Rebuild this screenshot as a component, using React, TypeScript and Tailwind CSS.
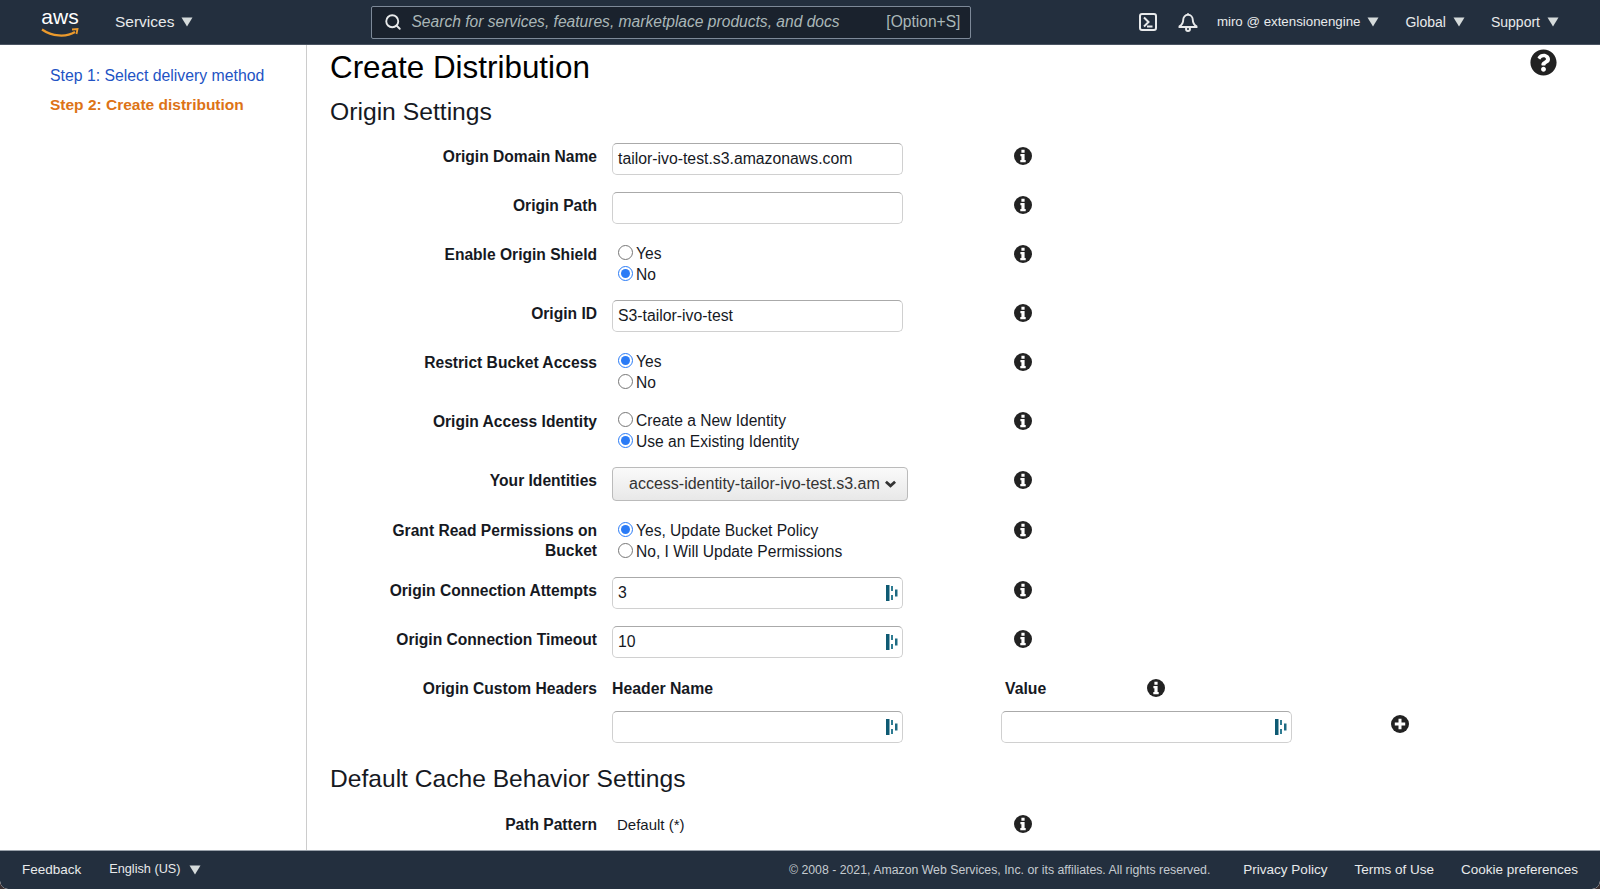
import { Search } from "lucide-react";
import { FaQuestionCircle } from "react-icons/fa";

function Caret({ className = "" }: { className?: string }) {
  return (
    <svg viewBox="0 0 12 10" className={`w-[12px] h-[10px] ${className}`}>
      <path d="M0.5 0.5h11L6 9.5z" fill="#d5dbdb" />
    </svg>
  );
}

function Info() {
  return (
    <svg viewBox="0 0 18 18" className="h-[18px] w-[18px]">
      <circle cx="9" cy="9" r="9" fill="#222" />
      <path d="M7.4 2.8h3.2v2.9H7.4zM6.4 7h4.2v6h1.1v2.2H6.3V13h1.1V9.2h-1z" fill="#fff" />
    </svg>
  );
}

// little password manager mark that sits inside the text inputs
function FieldMark() {
  return (
    <svg viewBox="0 0 13 16" className="w-[13px] h-[16px]">
      <path d="M1 0h3.5v16H1z" fill="#0e5a73" />
      <path d="M6 1h2v5H6zM6 10h2v5H6z" fill="#2f7c93" />
      <path d="M10 4.5h2.5v7H10z" fill="#1d6a82" />
    </svg>
  );
}

function Field({ value = "", mark = false, className = "" }: { value?: string; mark?: boolean; className?: string }) {
  return (
    <div className={`h-[32px] w-[291px] flex items-center justify-between rounded-[5px] border border-[#d0d0d0] border-t-[#aaa] bg-white pl-[5px] pr-[4px] text-[15.8px] text-[#16191f] ${className}`}>
      <span>{value}</span>
      {mark && <FieldMark />}
    </div>
  );
}

function Radio({ label, checked = false }: { label: string; checked?: boolean }) {
  return (
    <label className="flex h-[21px] items-center text-[15.6px] leading-[21px] text-[#16191f]">
      <input type="radio" defaultChecked={checked} name={label} className="ml-[6px] mr-[3px] -mt-[3px] h-[15px] w-[15px] accent-[#2a7bf6]" />
      {label}
    </label>
  );
}

function Row({ label, height, info = true, children }: { label: string; height: string; info?: boolean; children: React.ReactNode }) {
  return (
    <div className={`flex ${height}`}>
      <div className="w-[267px] shrink-0 pl-[50px] pt-[4px] text-right text-[15.6px] font-bold leading-[20px] text-[#16191f]">{label}</div>
      <div className="ml-[15px] w-[402px] shrink-0">{children}</div>
      {info && <div className="pt-[4px]"><Info /></div>}
    </div>
  );
}

export default function App() {
  return (
    <div className="h-screen bg-[#3a2f30] font-['Liberation_Sans',sans-serif]">
      <div className="flex h-full flex-col overflow-hidden rounded-b-[8px] bg-white">
        <header className="flex h-[45px] shrink-0 items-center border-b border-[#4a5462] bg-[#232f3e] text-[14px] text-[#e8eaeb]">
          <div className="relative ml-[41px] w-[38px]">
            <span className="block text-center text-[21px] font-normal leading-[20px] -mt-[10px] text-white">aws</span>
            <svg viewBox="0 0 38 10" className="absolute left-0 top-[11px] h-[10px] w-[38px]">
              <path d="M1 1.5c10 7 24 8 33 2.5" stroke="#ec9a2c" strokeWidth="2.2" fill="none" />
              <path d="M31 1.5l5.5-.5-1 5" stroke="#ec9a2c" strokeWidth="1.8" fill="none" />
            </svg>
          </div>
          <div className="ml-[36px] flex items-center gap-[7px] text-[15.5px]">
            Services <Caret />
          </div>
          <div className="ml-[178px] flex h-[33px] w-[600px] items-center rounded-[2px] border border-[#7d8998] bg-[#1a222d] pl-[12px] pr-[10px] text-[15.6px]">
            <Search className="h-[18px] w-[18px] text-[#e8eaeb]" strokeWidth={2.5} />
            <span className="ml-[9px] italic text-[#aab7b8]">Search for services, features, marketplace products, and docs</span>
            <span className="ml-auto text-[#aab7b8]">[Option+S]</span>
          </div>
          <div className="ml-auto flex items-center pr-[41px]">
            <svg viewBox="0 0 18 18" className="h-[18px] w-[18px]" fill="none" stroke="#e8eaeb">
              <rect x="1" y="1" width="16" height="16" rx="2" strokeWidth="2" />
              <path d="M5 4.5l4.500 4.500-4.500 4.500M8 13.500h5.500" strokeWidth="2" />
            </svg>
            <svg viewBox="0 0 20 20" className="ml-[21px] h-[20px] w-[20px]" fill="none" stroke="#e8eaeb" strokeWidth="1.9">
              <path d="M10 1.2v1.6M5.2 8c0-3 2-5.2 4.8-5.2s4.8 2.2 4.8 5.2c0 3 1.7 5 3.7 6.4v.6H1.500v-.6C3.500 13 5.200 11 5.200 8z" />
              <circle cx="10" cy="17" r="2" />
            </svg>
            <span className="ml-[19px] text-[13.3px]">miro @ extensionengine</span>
            <Caret className="ml-[7px]" />
            <span className="ml-[26px]">Global</span>
            <Caret className="ml-[7px]" />
            <span className="ml-[26px]">Support</span>
            <Caret className="ml-[7px]" />
          </div>
        </header>

        <div className="flex min-h-0 flex-1">
          <aside className="w-[307px] shrink-0 border-r border-[#ccc] pl-[50px] pt-[21px] leading-[20px]">
            <div className="text-[15.8px] text-[#2253c4]">Step 1: Select delivery method</div>
            <div className="mt-[9px] text-[15.5px] font-bold text-[#dd7316]">Step 2: Create distribution</div>
          </aside>

          <main className="relative flex-1 overflow-hidden pl-[23px]">
            <FaQuestionCircle className="absolute right-[43px] top-[4px] text-[27px] text-[#222]" />
            <h1 className="pt-[4px] text-[31.4px] leading-[38px] text-black">Create Distribution</h1>
            <h2 className="mt-[10px] text-[24.7px] leading-[30px] text-[#16191f]">Origin Settings</h2>
            <div className="mt-[16px]">
              <Row label="Origin Domain Name" height="h-[49px]"><Field value="tailor-ivo-test.s3.amazonaws.com" /></Row>
              <Row label="Origin Path" height="h-[49px]"><Field /></Row>
              <Row label="Enable Origin Shield" height="h-[59px]">
                <div className="pt-[2px]">
                  <Radio label="Yes" />
                  <Radio label="No" checked />
                </div>
              </Row>
              <Row label="Origin ID" height="h-[49px]"><Field value="S3-tailor-ivo-test" /></Row>
              <Row label="Restrict Bucket Access" height="h-[59px]">
                <div className="pt-[2px]">
                  <Radio label="Yes" checked />
                  <Radio label="No" />
                </div>
              </Row>
              <Row label="Origin Access Identity" height="h-[59px]">
                <div className="pt-[2px]">
                  <Radio label="Create a New Identity" />
                  <Radio label="Use an Existing Identity" checked />
                </div>
              </Row>
              <Row label="Your Identities" height="h-[50px]">
                <div className="flex h-[34px] w-[296px] items-center justify-between rounded-[4px] border border-[#bbb] bg-gradient-to-b from-[#fafafa] to-[#e8e8e8] pl-[16px] pr-[11px] text-[16px] text-[#333]">
                  <span>access-identity-tailor-ivo-test.s3.am</span>
                  <svg viewBox="0 0 12 8" className="h-[8px] w-[11px]" fill="none" stroke="#333" strokeWidth="3">
                    <path d="M1 1.5l5 4.500 5-4.500" />
                  </svg>
                </div>
              </Row>
              <Row label="Grant Read Permissions on Bucket" height="h-[60px]">
                <div className="pt-[3px]">
                  <Radio label="Yes, Update Bucket Policy" checked />
                  <Radio label="No, I Will Update Permissions" />
                </div>
              </Row>
              <Row label="Origin Connection Attempts" height="h-[49px]"><Field value="3" mark /></Row>
              <Row label="Origin Connection Timeout" height="h-[49px]"><Field value="10" mark /></Row>
              <Row label="Origin Custom Headers" height="h-[36px]" info={false}>
                <div className="flex items-start pt-[4px] text-[15.8px] font-bold leading-[20px] text-[#16191f]">
                  <span className="w-[393px] shrink-0">Header Name</span>
                  <span className="w-[142px] shrink-0">Value</span>
                  <span><Info /></span>
                </div>
              </Row>
              <div className="flex h-[53px] pl-[282px]">
                <Field mark />
                <Field mark className="ml-[98px]" />
                <svg viewBox="0 0 18 18" className="ml-[99px] mt-[4px] h-[18px] w-[18px]">
                  <circle cx="9" cy="9" r="9" fill="#222" />
                  <path d="M7.500 3.800h3v3.700h3.700v3h-3.700v3.700h-3v-3.700H3.800v-3h3.700z" fill="#fff" />
                </svg>
              </div>
            </div>
            <h2 className="text-[24.6px] leading-[30px] text-[#16191f]">Default Cache Behavior Settings</h2>
            <div className="mt-[17px]">
              <Row label="Path Pattern" height="h-[30px]">
                <div className="ml-[5px] pt-[4px] text-[15px] leading-[20px] text-[#16191f]">Default (*)</div>
              </Row>
            </div>
          </main>
        </div>

        <footer className="flex h-[39px] shrink-0 items-center rounded-b-[8px] border-t border-[#9aa2ab] bg-[#232f3e] pl-[22px] pr-[22px] text-[13.5px] text-[#e8eaeb]">
          <span>Feedback</span>
          <span className="ml-[28px] text-[12.7px]">English (US)</span>
          <Caret className="ml-[8px]" />
          <span className="ml-auto text-[12.3px] text-[#c5cbd0]">© 2008 - 2021, Amazon Web Services, Inc. or its affiliates. All rights reserved.</span>
          <span className="ml-[33px]">Privacy Policy</span>
          <span className="ml-[27px]">Terms of Use</span>
          <span className="ml-[27px]">Cookie preferences</span>
        </footer>
      </div>
    </div>
  );
}
